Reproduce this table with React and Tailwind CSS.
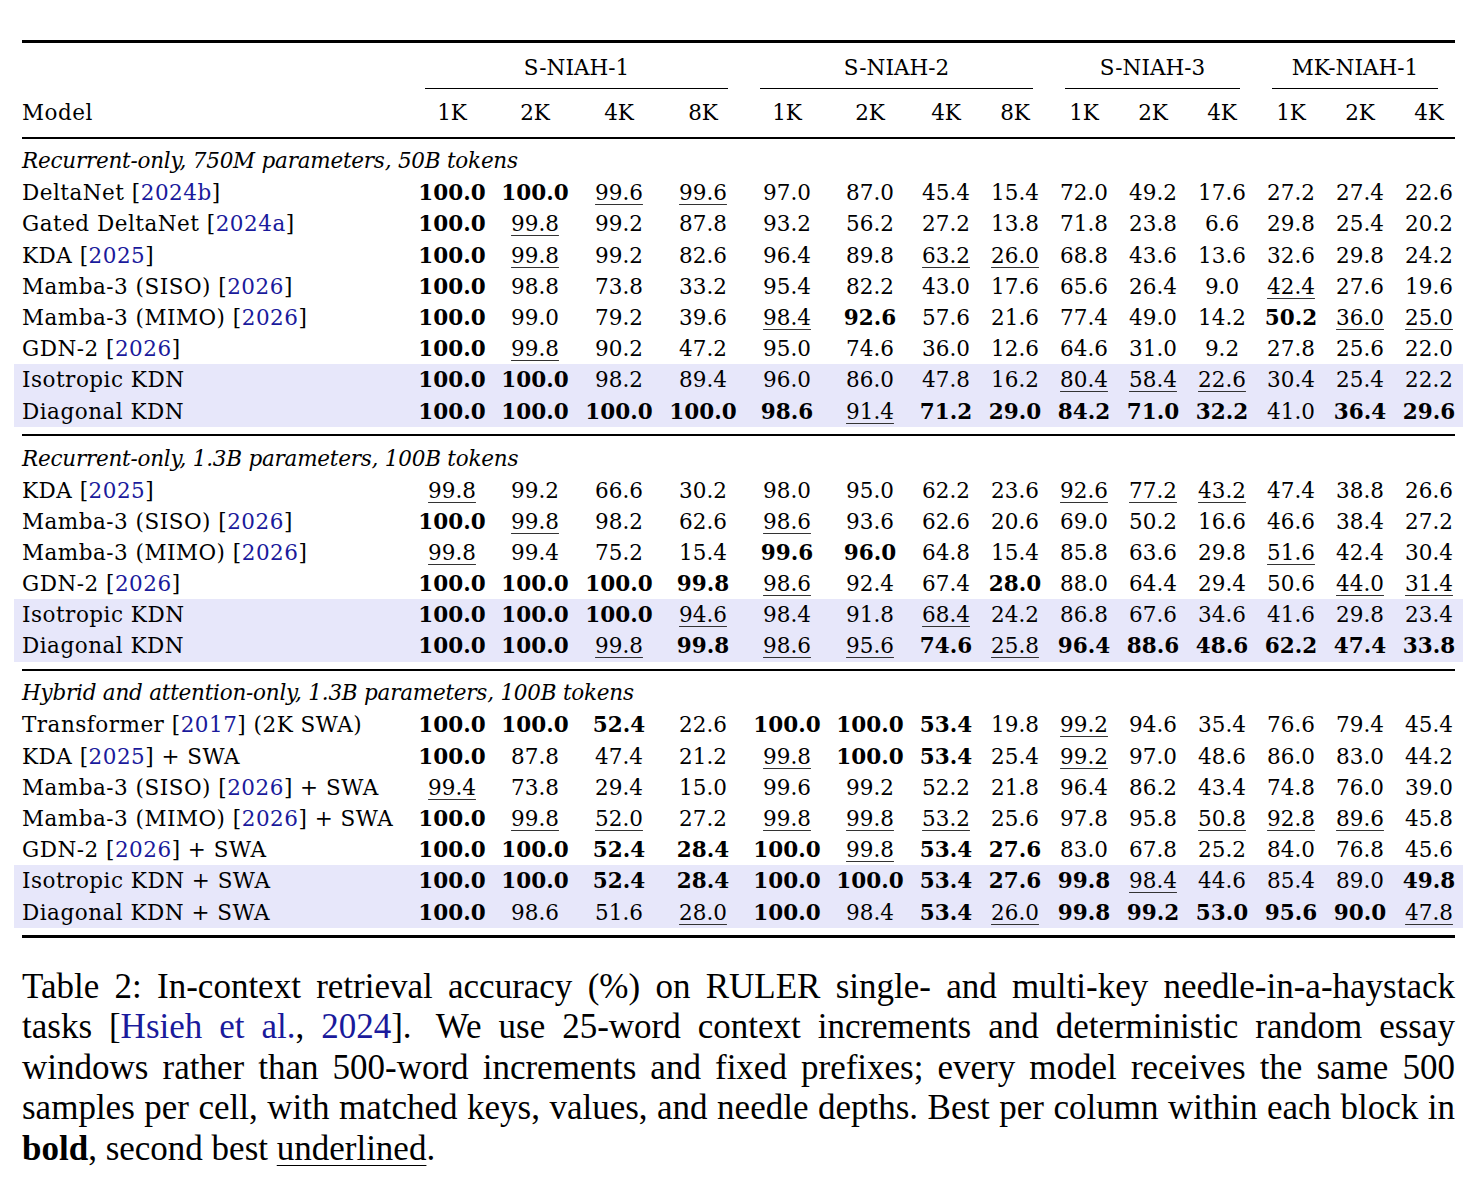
import React from 'react';
import clsx from 'clsx';

// column template shared by every table row (model + 14 value columns)
const GRID =
  'grid grid-cols-[388.5px_83px_83px_85px_83px_85px_81px_71px_67px_71px_67px_71px_67px_71px_67px]';

const groups = [
  { label: 'S-NIAH-1', span: 'col-span-4', trim: 'ml-[14.5px] mr-[16.5px]' },
  { label: 'S-NIAH-2', span: 'col-span-4', trim: 'ml-[15.5px] mr-[15.5px]' },
  { label: 'S-NIAH-3', span: 'col-span-3', trim: 'ml-[16.5px] mr-[17.5px]' },
  { label: 'MK-NIAH-1', span: 'col-span-3', trim: 'ml-[14.5px] mr-[24.5px]' },
];

const lengths = ['1K', '2K', '4K', '8K', '1K', '2K', '4K', '8K', '1K', '2K', '4K', '1K', '2K', '4K'];

// b = bold (best), u = underlined (second best)
const blocks = [
  {
    title: 'Recurrent-only, 750M parameters, 50B tokens',
    rows: [
      { name: ['DeltaNet', '2024b'], vals: 'b100.0 b100.0 u99.6 u99.6 97.0 87.0 45.4 15.4 72.0 49.2 17.6 27.2 27.4 22.6' },
      { name: ['Gated DeltaNet', '2024a'], vals: 'b100.0 u99.8 99.2 87.8 93.2 56.2 27.2 13.8 71.8 23.8 6.6 29.8 25.4 20.2' },
      { name: ['KDA', '2025'], vals: 'b100.0 u99.8 99.2 82.6 96.4 89.8 u63.2 u26.0 68.8 43.6 13.6 32.6 29.8 24.2' },
      { name: ['Mamba-3 (SISO)', '2026'], vals: 'b100.0 98.8 73.8 33.2 95.4 82.2 43.0 17.6 65.6 26.4 9.0 u42.4 27.6 19.6' },
      { name: ['Mamba-3 (MIMO)', '2026'], vals: 'b100.0 99.0 79.2 39.6 u98.4 b92.6 57.6 21.6 77.4 49.0 14.2 b50.2 u36.0 u25.0' },
      { name: ['GDN-2', '2026'], vals: 'b100.0 u99.8 90.2 47.2 95.0 74.6 36.0 12.6 64.6 31.0 9.2 27.8 25.6 22.0' },
    ],
    ours: [
      { name: ['Isotropic KDN'], vals: 'b100.0 b100.0 98.2 89.4 96.0 86.0 47.8 16.2 u80.4 u58.4 u22.6 30.4 25.4 22.2' },
      { name: ['Diagonal KDN'], vals: 'b100.0 b100.0 b100.0 b100.0 b98.6 u91.4 b71.2 b29.0 b84.2 b71.0 b32.2 41.0 b36.4 b29.6' },
    ],
  },
  {
    title: 'Recurrent-only, 1.3B parameters, 100B tokens',
    rows: [
      { name: ['KDA', '2025'], vals: 'u99.8 99.2 66.6 30.2 98.0 95.0 62.2 23.6 u92.6 u77.2 u43.2 47.4 38.8 26.6' },
      { name: ['Mamba-3 (SISO)', '2026'], vals: 'b100.0 u99.8 98.2 62.6 u98.6 93.6 62.6 20.6 69.0 50.2 16.6 46.6 38.4 27.2' },
      { name: ['Mamba-3 (MIMO)', '2026'], vals: 'u99.8 99.4 75.2 15.4 b99.6 b96.0 64.8 15.4 85.8 63.6 29.8 u51.6 42.4 30.4' },
      { name: ['GDN-2', '2026'], vals: 'b100.0 b100.0 b100.0 b99.8 u98.6 92.4 67.4 b28.0 88.0 64.4 29.4 50.6 u44.0 u31.4' },
    ],
    ours: [
      { name: ['Isotropic KDN'], vals: 'b100.0 b100.0 b100.0 u94.6 98.4 91.8 u68.4 24.2 86.8 67.6 34.6 41.6 29.8 23.4' },
      { name: ['Diagonal KDN'], vals: 'b100.0 b100.0 u99.8 b99.8 u98.6 u95.6 b74.6 u25.8 b96.4 b88.6 b48.6 b62.2 b47.4 b33.8' },
    ],
  },
  {
    title: 'Hybrid and attention-only, 1.3B parameters, 100B tokens',
    rows: [
      { name: ['Transformer', '2017', ' (2K SWA)'], vals: 'b100.0 b100.0 b52.4 22.6 b100.0 b100.0 b53.4 19.8 u99.2 94.6 35.4 76.6 79.4 45.4' },
      { name: ['KDA', '2025', ' + SWA'], vals: 'b100.0 87.8 47.4 21.2 u99.8 b100.0 b53.4 25.4 u99.2 97.0 48.6 86.0 83.0 44.2' },
      { name: ['Mamba-3 (SISO)', '2026', ' + SWA'], vals: 'u99.4 73.8 29.4 15.0 99.6 99.2 52.2 21.8 96.4 86.2 43.4 74.8 76.0 39.0' },
      { name: ['Mamba-3 (MIMO)', '2026', ' + SWA'], vals: 'b100.0 u99.8 u52.0 27.2 u99.8 u99.8 u53.2 25.6 97.8 95.8 u50.8 u92.8 u89.6 45.8' },
      { name: ['GDN-2', '2026', ' + SWA'], vals: 'b100.0 b100.0 b52.4 b28.4 b100.0 u99.8 b53.4 b27.6 83.0 67.8 25.2 84.0 76.8 45.6' },
    ],
    ours: [
      { name: ['Isotropic KDN + SWA'], vals: 'b100.0 b100.0 b52.4 b28.4 b100.0 b100.0 b53.4 b27.6 b99.8 u98.4 44.6 85.4 89.0 b49.8' },
      { name: ['Diagonal KDN + SWA'], vals: 'b100.0 98.6 51.6 u28.0 b100.0 98.4 b53.4 u26.0 b99.8 b99.2 b53.0 b95.6 b90.0 u47.8' },
    ],
  },
];

const Cite = ({ children }) => <span className="text-[#1a1a9c]">{children}</span>;

const ModelName = ({ name }) => {
  const [pre, cite, post] = name;
  return (
    <div className="whitespace-nowrap tracking-[0.5px]">
      {pre}
      {cite && (
        <>
          {' ['}
          <Cite>{cite}</Cite>
          {']'}
        </>
      )}
      {post}
    </div>
  );
};

const Value = ({ raw }) => {
  const flag = raw[0];
  const text = flag === 'b' || flag === 'u' ? raw.slice(1) : raw;
  return (
    <div className="flex justify-center whitespace-nowrap">
      <span
        className={clsx(
          flag === 'b' && 'font-bold',
          flag === 'u' && 'underline decoration-1 underline-offset-[4px] decoration-[#333]'
        )}
      >
        {text}
      </span>
    </div>
  );
};

const Row = ({ row }) => (
  <div className={`${GRID} h-[31.2px] items-center leading-[31.2px]`}>
    <ModelName name={row.name} />
    {row.vals.split(' ').map((v, i) => (
      <Value key={i} raw={v} />
    ))}
  </div>
);

const Block = ({ block }) => (
  <div className="pt-[6.6px] pb-[7.2px]">
    <div className="h-[32px] leading-[32px] italic whitespace-nowrap tracking-[-0.23px]">{block.title}</div>
    {block.rows.map((r, i) => (
      <Row key={i} row={r} />
    ))}
    <div className="-mx-[8px] px-[8px] bg-[#e7e7fa]">
      {block.ours.map((r, i) => (
        <Row key={i} row={r} />
      ))}
    </div>
  </div>
);

const Line = ({ children, last }) => (
  <div className={clsx('whitespace-nowrap', !last && 'text-justify [text-align-last:justify]')}>{children}</div>
);

export default function App() {
  return (
    <div className="min-h-screen bg-white text-black">
      <div className="w-[1433px] ml-[22px] pt-[39.5px]">
        {/* table */}
        <div className="font-['DejaVu_Serif',serif] text-[21.5px]">
          <div className="h-[3px] bg-black" />

          {/* group headers with trimmed rules */}
          <div className={`${GRID} pt-[9px]`}>
            <div />
            {groups.map((g) => (
              <div key={g.label} className={g.span}>
                <div className={`${g.trim} h-[31.2px] leading-[31.2px] text-center box-content pb-[5.5px] border-b border-black`}>
                  {g.label}
                </div>
              </div>
            ))}
          </div>

          {/* column labels */}
          <div className={`${GRID} h-[31.2px] mt-[7.9px] leading-[31.2px] items-center`}>
            <div className="tracking-[0.5px]">Model</div>
            {lengths.map((l, i) => (
              <div key={i} className="text-center">
                {l}
              </div>
            ))}
          </div>
          <div className="mt-[8.4px] h-[2px] bg-black" />

          {blocks.map((b, i) => (
            <React.Fragment key={i}>
              <Block block={b} />
              {i < blocks.length - 1 ? (
                <div className="h-[2px] bg-black" />
              ) : (
                <div className="h-[3px] bg-black" />
              )}
            </React.Fragment>
          ))}
        </div>

        {/* caption */}
        <div className="mt-[29px] font-['Liberation_Serif',serif] text-[35px] leading-[40.5px]">
          <Line>
            Table 2: In-context retrieval accuracy (%) on RULER single- and multi-key needle-in-a-haystack
          </Line>
          <Line>
            tasks [<Cite>Hsieh et al.</Cite>, <Cite>2024</Cite>].<span className="ml-[8px]" /> We use 25-word context
            increments and deterministic random essay
          </Line>
          <Line>
            windows rather than 500-word increments and fixed prefixes; every model receives the same 500
          </Line>
          <Line>
            samples per cell, with matched keys, values, and needle depths. Best per column within each block in
          </Line>
          <Line last>
            <span className="font-bold">bold</span>, second best{' '}
            <span className="underline decoration-1 underline-offset-[5px]">underlined</span>.
          </Line>
        </div>
      </div>
    </div>
  );
}
